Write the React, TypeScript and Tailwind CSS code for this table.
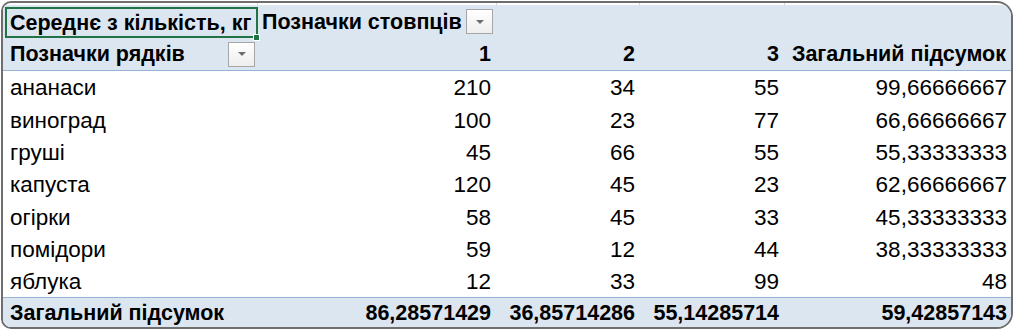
import React from "react";

const rows: [string, string, string, string, string][] = [
  ["ананаси", "210", "34", "55", "99,66666667"],
  ["виноград", "100", "23", "77", "66,66666667"],
  ["груші", "45", "66", "55", "55,33333333"],
  ["капуста", "120", "45", "23", "62,66666667"],
  ["огірки", "58", "45", "33", "45,33333333"],
  ["помідори", "59", "12", "44", "38,33333333"],
  ["яблука", "12", "33", "99", "48"],
];

const cols = "grid grid-cols-[255px_239px_143px_145px_1fr]";

function Dropdown() {
  return (
    <div className="shrink-0 w-[27px] h-[25px] border border-[#a6a6a6] bg-gradient-to-b from-white to-[#eeeeee] flex items-center justify-center">
      <svg width="10" height="6" viewBox="0 0 10 6">
        <path d="M1 1 L9 1 L5 5 Z" fill="#6d6d6d" />
      </svg>
    </div>
  );
}

export default function App() {
  return (
    <div className="w-[1019px] h-[332px] bg-white pl-[1px] pt-[1px] font-['Liberation_Sans',Arial,sans-serif] text-[22.5px] text-black leading-none whitespace-nowrap">
      <div className="w-[1012px] h-[328px] border-2 border-[#6e6e6e] rounded-tl-[10px] rounded-bl-[10px] rounded-tr-[16px] rounded-br-[16px] overflow-hidden bg-white flex flex-col">
        {/* grid strip */}
        <div className={`${cols} h-[2px] shrink-0`}>
          <div className="border-r border-[#d4d4d4]" />
          <div className="border-r border-[#d4d4d4]" />
          <div className="border-r border-[#d4d4d4]" />
          <div className="border-r border-[#d4d4d4]" />
          <div />
        </div>
        {/* header row 1 */}
        <div className={`${cols} h-[33px] shrink-0 bg-[#dce6f1] font-bold text-[21.5px]`}>
          <div className="relative pl-[2px] pt-[2px]">
            <div className="h-full border-2 border-[#217346] flex items-center pl-[3px] pt-[2px]">
              Середнє з кількість, кг
            </div>
            <div className="absolute right-[-2px] bottom-[-3px] w-[7px] h-[7px] bg-[#217346] border border-white" />
          </div>
          <div className="flex items-center justify-between pl-[4px] pr-[4px]">
            <span className="pt-[2px]">Позначки стовпців</span>
            <Dropdown />
          </div>
          <div />
          <div />
          <div />
        </div>
        {/* header row 2 */}
        <div className={`${cols} h-[33px] shrink-0 bg-[#dce6f1] border-b border-[#95b3d7] font-bold text-[21.5px]`}>
          <div className="flex items-center justify-between pl-[7px] pr-[3px]">
            <span className="pt-[2px]">Позначки рядків</span>
            <Dropdown />
          </div>
          <div className="flex items-center justify-end pr-[6px] pt-[2px]">1</div>
          <div className="flex items-center justify-end pr-[5px] pt-[2px]">2</div>
          <div className="flex items-center justify-end pr-[6px] pt-[2px]">3</div>
          <div className="flex items-center justify-end pr-[5px] pt-[2px]">Загальний підсумок</div>
        </div>
        {rows.map((r) => (
          <div key={r[0]} className={`${cols} h-[32.3px] shrink-0`}>
            <div className="flex items-center pl-[7px] pt-[3px]">{r[0]}</div>
            <div className="flex items-center justify-end pr-[6px] pt-[3px]">{r[1]}</div>
            <div className="flex items-center justify-end pr-[5px] pt-[3px]">{r[2]}</div>
            <div className="flex items-center justify-end pr-[6px] pt-[3px]">{r[3]}</div>
            <div className="flex items-center justify-end pr-[4px] pt-[3px]">{r[4]}</div>
          </div>
        ))}
        {/* total */}
        <div className={`${cols} flex-1 bg-[#dce6f1] border-t border-[#95b3d7] font-bold text-[21.5px]`}>
          <div className="flex items-center pl-[7px] pt-[2px]">Загальний підсумок</div>
          <div className="flex items-center justify-end pr-[6px] pt-[2px]">86,28571429</div>
          <div className="flex items-center justify-end pr-[5px] pt-[2px]">36,85714286</div>
          <div className="flex items-center justify-end pr-[6px] pt-[2px]">55,14285714</div>
          <div className="flex items-center justify-end pr-[4px] pt-[2px]">59,42857143</div>
        </div>
      </div>
    </div>
  );
}
